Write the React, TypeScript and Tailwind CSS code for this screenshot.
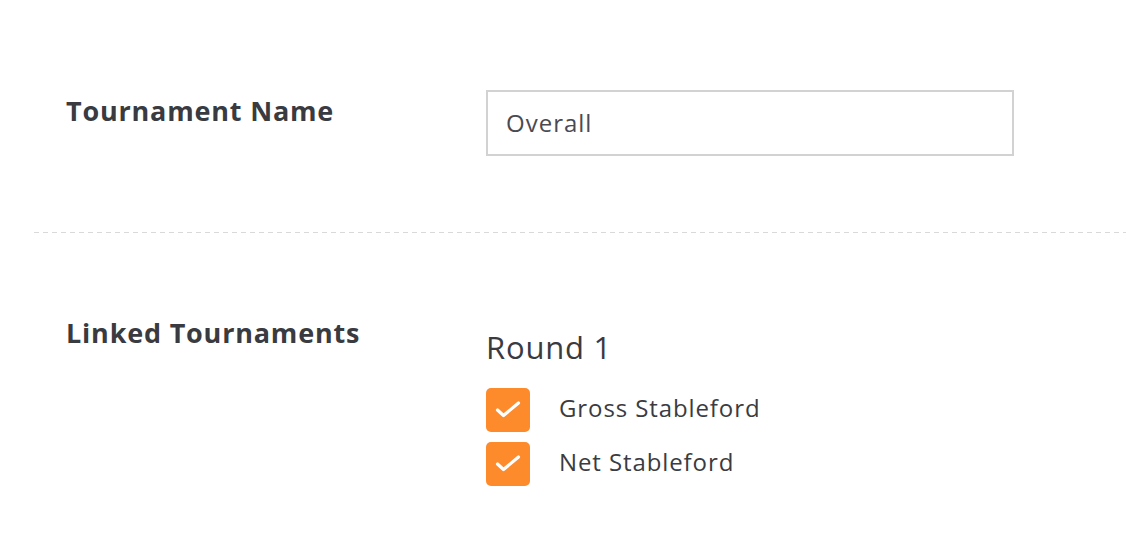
function Checkbox({ label }: { label: string }) {
  return (
    <label className="flex items-center h-[44px] gap-[29px]">
      <span className="w-[44px] h-[44px] rounded-[5px] bg-[#fd8a2b] flex items-center justify-center shrink-0">
        <svg width="44" height="44" viewBox="0 0 44 44" fill="none">
          <path d="M11.5 22l6 5.5L32.5 15" stroke="#fff" strokeWidth="3.2" strokeLinecap="round" strokeLinejoin="round" />
        </svg>
      </span>
      <span className="pb-[4px] text-[24px] tracking-[0.9px] text-[#3b3b42] leading-none">{label}</span>
    </label>
  );
}

export default function App() {
  return (
    <div className="w-[1126px] h-[554px] bg-white overflow-hidden font-['Open_Sans',sans-serif]">
      <div className="flex pl-[66px] pt-[90px]">
        <div className="w-[420px] pt-[3px] text-[27px] tracking-[0.8px] font-bold text-[#3a3a41] leading-[36px]">Tournament Name</div>
        <div className="w-[528px] h-[66px] border-2 border-[#d2d2d2] flex items-center pl-[18px] text-[24px] tracking-[1px] text-[#4a4a50]">
          Overall
        </div>
      </div>

      <div className="ml-[34px] mt-[76px] h-px bg-[repeating-linear-gradient(to_right,#d9d9d9_0_5px,transparent_5px_9px)]" />

      <div className="flex pl-[66px] pt-[80px]">
        <div className="w-[420px] pt-[2px] text-[27px] tracking-[0.8px] font-bold text-[#3a3a41] leading-[36px]">Linked Tournaments</div>
        <div className="pt-[14px]">
          <div className="text-[31px] tracking-[0.8px] text-[#3a3a41] leading-[40px]">Round 1</div>
          <div className="mt-[21px] flex flex-col gap-[10px]">
            <Checkbox label="Gross Stableford" />
            <Checkbox label="Net Stableford" />
          </div>
        </div>
      </div>
    </div>
  );
}
